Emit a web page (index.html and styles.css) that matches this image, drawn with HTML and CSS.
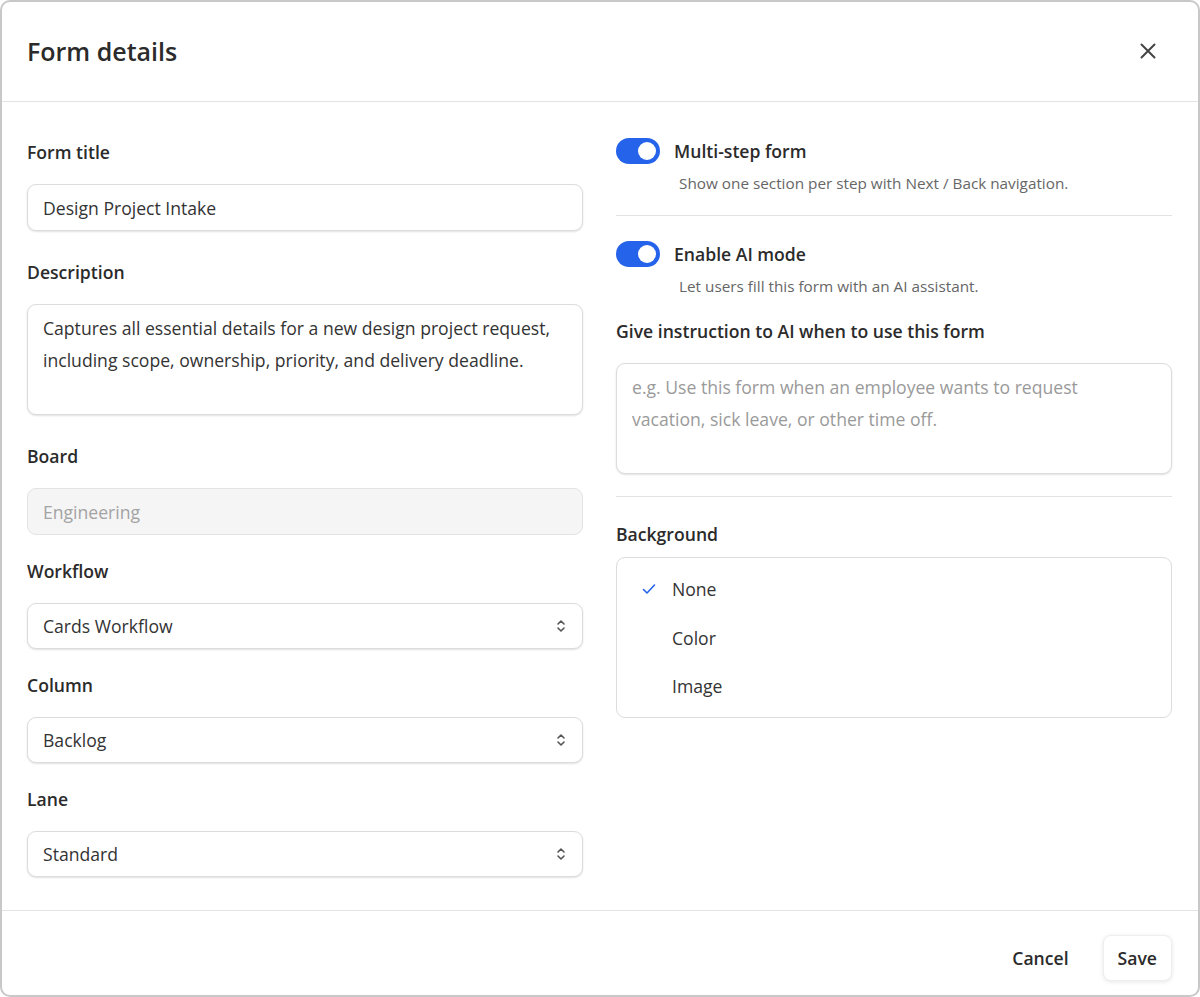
FILE: index.html
```html
<!DOCTYPE html>
<html lang="en">
<head>
  <meta charset="UTF-8">
  <meta name="viewport" content="width=device-width, initial-scale=1.0">
  <title>Form details</title>
  <link rel="stylesheet" href="styles.css">
</head>
<body>
  <div class="dialog">
    <div class="dialog-header">
      <h1 class="dialog-title">Form details</h1>
      <button class="close-button" aria-label="Close">
        <svg width="16" height="16" viewBox="0 0 16 16" fill="none" stroke="#444" stroke-width="2" stroke-linecap="round">
          <path d="M1.5 1.5L14.5 14.5M14.5 1.5L1.5 14.5"/>
        </svg>
      </button>
    </div>

    <div class="dialog-body">
      <div class="column">
        <div class="field field-wide">
          <label class="field-label">Form title</label>
          <input class="text-input" type="text" value="Design Project Intake">
        </div>

        <div class="field field-wide">
          <label class="field-label">Description</label>
          <textarea class="text-area">Captures all essential details for a new design project request, including scope, ownership, priority, and delivery deadline.</textarea>
        </div>

        <div class="field">
          <label class="field-label">Board</label>
          <input class="text-input disabled" type="text" value="Engineering" disabled>
        </div>

        <div class="field">
          <label class="field-label">Workflow</label>
          <div class="select-box">
            <span>Cards Workflow</span>
            <svg width="10" height="14" viewBox="0 0 10 14" fill="none" stroke="#555" stroke-width="1.6" stroke-linecap="round" stroke-linejoin="round"><path d="M2 5L5 2L8 5M2 9L5 12L8 9"/></svg>
          </div>
        </div>

        <div class="field">
          <label class="field-label">Column</label>
          <div class="select-box">
            <span>Backlog</span>
            <svg width="10" height="14" viewBox="0 0 10 14" fill="none" stroke="#555" stroke-width="1.6" stroke-linecap="round" stroke-linejoin="round"><path d="M2 5L5 2L8 5M2 9L5 12L8 9"/></svg>
          </div>
        </div>

        <div class="field field-last">
          <label class="field-label">Lane</label>
          <div class="select-box">
            <span>Standard</span>
            <svg width="10" height="14" viewBox="0 0 10 14" fill="none" stroke="#555" stroke-width="1.6" stroke-linecap="round" stroke-linejoin="round"><path d="M2 5L5 2L8 5M2 9L5 12L8 9"/></svg>
          </div>
        </div>
      </div>

      <div class="column column-settings">
        <div class="toggle-row">
          <span class="toggle on"><span class="knob"></span></span>
          <div class="toggle-text">
            <div class="toggle-title">Multi-step form</div>
            <div class="toggle-hint">Show one section per step with Next / Back navigation.</div>
          </div>
        </div>

        <div class="divider"></div>

        <div class="toggle-row">
          <span class="toggle on"><span class="knob"></span></span>
          <div class="toggle-text">
            <div class="toggle-title">Enable AI mode</div>
            <div class="toggle-hint">Let users fill this form with an AI assistant.</div>
          </div>
        </div>

        <div class="field ai-field">
          <label class="field-label">Give instruction to AI when to use this form</label>
          <textarea class="text-area ai-prompt" placeholder="e.g. Use this form when an employee wants to request vacation, sick leave, or other time off."></textarea>
        </div>

        <div class="divider"></div>

        <div class="field bg-field">
          <label class="field-label">Background</label>
          <div class="option-list">
            <div class="option selected">
              <svg class="check" width="14" height="12" viewBox="0 0 14 12" fill="none" stroke="#2563eb" stroke-width="1.6" stroke-linecap="round" stroke-linejoin="round"><path d="M1.5 6.5L5 10L12.5 2"/></svg>
              <span>None</span>
            </div>
            <div class="option"><span>Color</span></div>
            <div class="option"><span>Image</span></div>
          </div>
        </div>
      </div>
    </div>

    <div class="dialog-footer">
      <button class="btn btn-ghost">Cancel</button>
      <button class="btn btn-save">Save</button>
    </div>
  </div>
</body>
</html>
```

FILE: styles.css
```css
* {
  box-sizing: border-box;
  margin: 0;
  padding: 0;
}

html, body {
  height: 100%;
}

body {
  font-family: 'Open Sans', 'Noto Sans', Arial, sans-serif;
  color: #333;
  background-color: #fff;
}

.dialog {
  height: 100vh;
  border: 2px solid #c8c8c8;
  border-radius: 10px;
  display: flex;
  flex-direction: column;
  background-color: #fff;
  overflow: hidden;
}

.dialog-header {
  height: 100px;
  flex-shrink: 0;
  display: flex;
  align-items: center;
  justify-content: space-between;
  padding: 0 42px 2px 25px;
  border-bottom: 1px solid #e3e3e3;
}

.dialog-title {
  font-size: 25px;
  font-weight: 600;
  color: #2b2b2b;
}

.close-button {
  background: none;
  border: none;
  cursor: pointer;
  display: flex;
}

.dialog-body {
  flex: 1;
  display: grid;
  grid-template-columns: 556px 556px;
  align-items: start;
  column-gap: 33px;
  padding: 38px 26px 0 25px;
}

.column-settings {
  margin-top: -2px;
}

.field {
  margin-bottom: 24px;
}

.field-wide {
  margin-bottom: 29px;
}

.field-last {
  margin-bottom: 0;
}

.field-label {
  display: block;
  font-size: 17.6px;
  font-weight: 600;
  line-height: 24px;
  color: #2b2b2b;
  margin-bottom: 20px;
}

.text-input,
.text-area,
.select-box {
  width: 100%;
  font-family: inherit;
  font-size: 17.6px;
  color: #333;
  background-color: #fff;
  border: 1px solid #dcdcdc;
  border-radius: 9px;
  box-shadow: 0 1px 2px rgba(0, 0, 0, 0.12);
  outline: none;
}

.text-input {
  height: 47px;
  padding: 0 15px;
}

.text-input.disabled {
  background-color: #f5f5f5;
  color: #a3a3a3;
  box-shadow: none;
  border-color: #e3e3e3;
}

.text-area {
  display: block;
  height: 111px;
  padding: 7px 15px;
  line-height: 32px;
  resize: none;
}

.text-area.ai-prompt {
  padding-right: 40px;
}

.text-area::placeholder {
  color: #9a9a9a;
}

.select-box {
  height: 46px;
  padding: 0 16px 0 15px;
  display: flex;
  align-items: center;
  justify-content: space-between;
}

.toggle-row {
  display: flex;
  align-items: flex-start;
  gap: 14px;
}

.toggle {
  width: 44px;
  height: 26px;
  border-radius: 13px;
  background-color: #d0d0d0;
  position: relative;
  flex-shrink: 0;
}

.toggle.on {
  background-color: #2563eb;
}

.knob {
  position: absolute;
  top: 4px;
  left: 4px;
  width: 18px;
  height: 18px;
  border-radius: 50%;
  background-color: #fff;
}

.toggle.on .knob {
  left: 22px;
}

.toggle-title {
  font-size: 17.6px;
  font-weight: 600;
  line-height: 26px;
  color: #2b2b2b;
}

.toggle-hint {
  font-size: 15.3px;
  line-height: 20px;
  color: #666;
  margin-top: 9px;
  padding-left: 5px;
}

.divider {
  height: 1px;
  background-color: #e3e3e3;
  margin: 22px 0 25px;
}

.ai-field {
  margin-top: 23px;
  margin-bottom: 6px;
}

.bg-field .field-label {
  margin-bottom: 11px;
}

.option-list {
  border: 1px solid #dcdcdc;
  border-radius: 9px;
  padding: 7px 0 6px;
}

.option {
  height: 48.5px;
  display: flex;
  align-items: center;
  padding-left: 55px;
  font-size: 17.6px;
  color: #333;
  position: relative;
}

.check {
  position: absolute;
  left: 25px;
  top: 18px;
}

.dialog-footer {
  height: 85px;
  flex-shrink: 0;
  border-top: 1px solid #e3e3e3;
  display: flex;
  align-items: center;
  justify-content: flex-end;
  gap: 18px;
  padding: 9px 26px 0 0;
}

.btn {
  font-family: inherit;
  font-size: 17.6px;
  font-weight: 600;
  color: #2b2b2b;
  height: 46px;
  border-radius: 8px;
  cursor: pointer;
}

.btn-ghost {
  background: none;
  border: none;
  padding: 0 16px;
}

.btn-save {
  background-color: #fff;
  border: 1px solid #eee;
  padding: 0 14px;
  box-shadow: 0 1px 4px rgba(0, 0, 0, 0.1);
}
```
